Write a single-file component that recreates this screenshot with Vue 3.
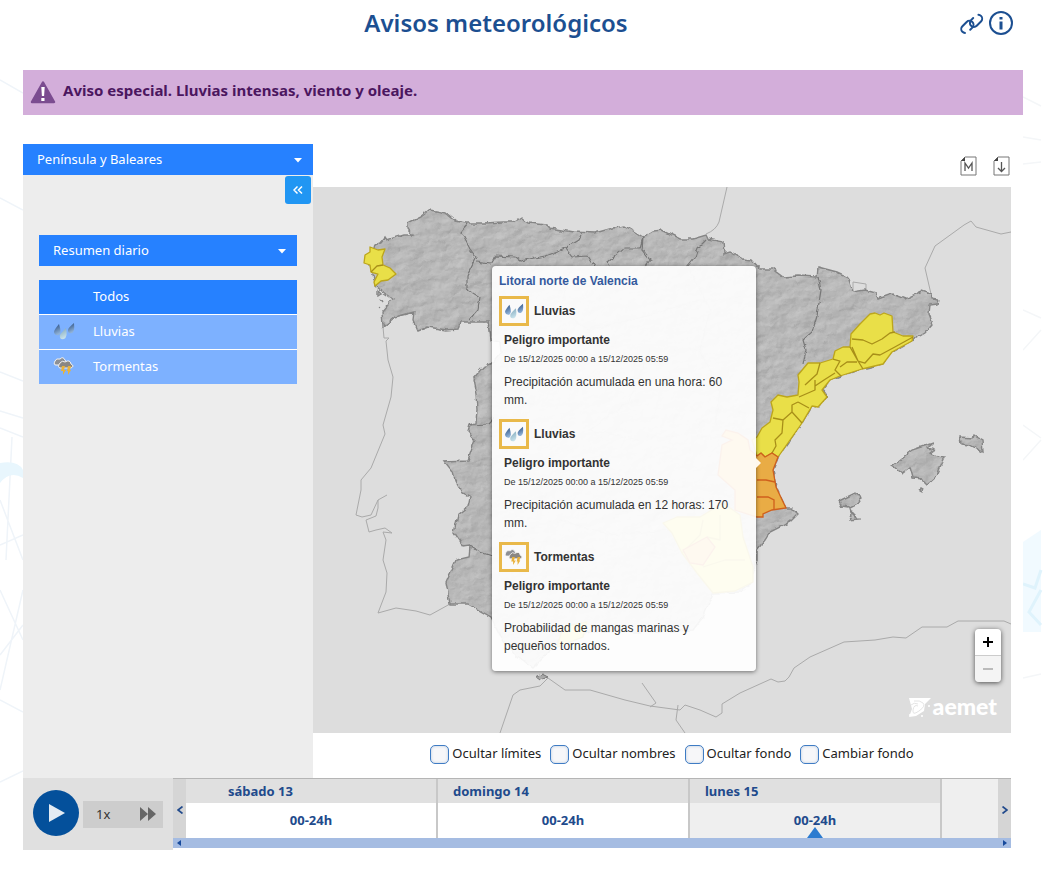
<script setup>
import { ref } from 'vue'

const region = ref('Península y Baleares')
const summary = ref('Resumen diario')
const phenomenon = ref('Todos')
const phenomena = [
  { name: 'Todos', icon: '' },
  { name: 'Lluvias', icon: 'rain' },
  { name: 'Tormentas', icon: 'storm' },
]
const period = 'De 15/12/2025 00:00 a 15/12/2025 05:59'
const warnings = [
  { name: 'Lluvias', icon: 'rain', text: 'Precipitación acumulada en una hora: 60 mm.' },
  { name: 'Lluvias', icon: 'rain', text: 'Precipitación acumulada en 12 horas: 170 mm.' },
  { name: 'Tormentas', icon: 'storm', text: 'Probabilidad de mangas marinas y pequeños tornados.' },
]
const toggles = [
  { id: 'limits', label: 'Ocultar límites' },
  { id: 'names', label: 'Ocultar nombres' },
  { id: 'ground', label: 'Ocultar fondo' },
  { id: 'change', label: 'Cambiar fondo' },
]
const days = [
  { name: 'sábado 13', first: true },
  { name: 'domingo 14' },
  { name: 'lunes 15', current: true },
]
</script>

<template>
  <div class="page">
    <svg class="backdrop left" viewBox="0 0 23 860" aria-hidden="true">
      <g fill="none" stroke="#eff4f9" stroke-width="1.500">
        <path d="M0 80L23 93M0 198L23 210M0 372L23 381" />
        <path d="M0 411L23 418M0 428L23 437M12 437L6 560M0 500L23 560M0 545L23 535M0 590L23 640M0 655L23 625M0 690L23 590M0 700L23 712M0 782L23 771" />
      </g>
      <path d="M0 463Q18 460 23 470V478Q10 470 0 483Z" fill="#e8f6fd" />
    </svg>
    <svg class="backdrop right" viewBox="0 0 22 860" aria-hidden="true">
      <g fill="none" stroke="#f4f6f8" stroke-width="1.500">
        <path d="M0 97L18 106M0 137L18 140M0 164L18 162M0 310L18 318M0 350L18 330M0 425L18 438M0 460L18 440M0 678L18 674" />
      </g>
      <path d="M0 542L18 530V632H0Z" fill="#f1faff" />
      <path d="M0 584L12 588L18 570M18 590L6 612L18 625" fill="none" stroke="#dff3fc" stroke-width="3" />
    </svg>

    <header class="top">
      <h1>Avisos meteorológicos</h1>
      <div class="top-icons">
        <a href="#enlace" aria-label="Enlace">
          <svg width="26" height="26" viewBox="0 0 26 26" fill="none" stroke="#1c4f91" stroke-width="2" stroke-linecap="round">
            <path d="M6.500 0H3.500a4 4 0 0 0-4 4 4 4 0 0 0 4 4H9.500a4 4 0 0 0 4-4 4 4 0 0 0-1-2.600" transform="translate(10.600 12.600) rotate(-45)" />
            <path d="M7 8H10a4 4 0 0 0 4-4 4 4 0 0 0-4-4H4a4 4 0 0 0-4 4 4 4 0 0 0 1 2.600" transform="translate(1.600 19) rotate(-45)" />
          </svg>
        </a>
        <button type="button" aria-label="Información">
          <svg width="26" height="26" viewBox="0 0 26 26">
            <circle cx="13" cy="13" r="11" fill="none" stroke="#1c4f91" stroke-width="2" />
            <path d="M11.500 7h3v2.500h-3zM11.500 11.500h3v8h-3z" fill="#1c4f91" />
          </svg>
        </button>
      </div>
    </header>

    <div class="alert">
      <svg width="26" height="23" viewBox="0 0 26 23">
        <path d="M13 1.500L24 21H2z" fill="#7b4c90" stroke="#7b4c90" stroke-width="2.500" stroke-linejoin="round" />
        <path d="M11.300 6h3.400l-.6 9h-2.200zM11.300 17h3.200v3h-3.200z" fill="#fff" />
      </svg>
      <a href="#aviso">Aviso especial. Lluvias intensas, viento y oleaje.</a>
    </div>

    <main class="viewer">
      <aside class="side">
        <div class="picker">
          <select v-model="region" aria-label="Zona">
            <option>Península y Baleares</option>
            <option>Canarias</option>
          </select>
          <svg width="8" height="5" viewBox="0 0 8 5"><path d="M0 0h8L4 4.500z" fill="#fff" /></svg>
        </div>
        <button class="collapse" type="button" aria-label="Plegar">
          <svg width="10" height="8" viewBox="0 0 10 8"><path d="M4.500 .5L1 4l3.500 3.500M9 .5L5.500 4 9 7.500" fill="none" stroke="#fff" stroke-width="1.500" /></svg>
        </button>
        <div class="filters">
          <div class="picker">
            <select v-model="summary" aria-label="Tipo de resumen">
              <option>Resumen diario</option>
              <option>Detalle horario</option>
            </select>
            <svg width="8" height="5" viewBox="0 0 8 5"><path d="M0 0h8L4 4.500z" fill="#fff" /></svg>
          </div>
          <div class="phenomena">
            <button
              v-for="p in phenomena"
              :key="p.name"
              type="button"
              :class="{ active: phenomenon === p.name }"
              @click="phenomenon = p.name"
            >
              <span class="glyph"><svg v-if="p.icon" width="22" height="20" viewBox="0 0 22 20"><use :href="'#' + p.icon" /></svg></span>
              {{ p.name }}
            </button>
          </div>
        </div>
      </aside>

      <section class="stage">
        <div class="tools">
          <button type="button" aria-label="Mapa">
            <svg width="17" height="20" viewBox="0 0 17 20">
              <path d="M5 1h11v18H1V5z" fill="#fff" stroke="#777" />
              <path d="M1 5h4V1z" fill="#444" />
              <path d="M5 15V7l3.500 5L12 7v8" fill="none" stroke="#555" stroke-width="1.300" />
            </svg>
          </button>
          <button type="button" aria-label="Descargar">
            <svg width="17" height="20" viewBox="0 0 17 20">
              <path d="M5 1h11v18H1V5z" fill="#fff" stroke="#777" />
              <path d="M1 5h4V1z" fill="#444" />
              <path d="M8.500 6v9M5 12l3.500 3.500L12 12" fill="none" stroke="#555" stroke-width="1.300" />
            </svg>
          </button>
        </div>

        <div class="map">
          <svg class="chart" viewBox="313 187 698 546" preserveAspectRatio="xMidYMid slice" aria-label="Mapa de avisos">
            <defs>
              <filter id="relief" x="0" y="0" width="100%" height="100%" color-interpolation-filters="sRGB">
                <feTurbulence type="fractalNoise" baseFrequency="0.05 0.08" numOctaves="4" seed="8" result="noise" />
                <feDiffuseLighting in="noise" surfaceScale="0.900" diffuseConstant="1.060" lighting-color="#c4c4c4" result="light">
                  <feDistantLight azimuth="220" elevation="62" />
                </feDiffuseLighting>
                <feComposite in="light" in2="SourceAlpha" operator="in" />
              </filter>
              <filter id="rough" x="-2%" y="-2%" width="104%" height="104%">
                <feTurbulence type="fractalNoise" baseFrequency="0.14" numOctaves="2" seed="4" result="n" />
                <feDisplacementMap in="SourceGraphic" in2="n" scale="5" xChannelSelector="R" yChannelSelector="G" />
              </filter>
              <linearGradient id="dropA" x1="0" y1="0" x2="0.300" y2="1"><stop offset="0" stop-color="#23477a" /><stop offset="1" stop-color="#8fb2d8" /></linearGradient>
              <linearGradient id="dropB" x1="0" y1="0" x2="0.300" y2="1"><stop offset="0" stop-color="#7da4b8" /><stop offset="1" stop-color="#c5e0ea" /></linearGradient>
              <path id="land" d="M375 245L380 243 385 237 387 240 403 235 413 235 408 229 408 223 420 217 429 210 436 211 446 213 456 221 466 223 485 223 503 222 513 222 521 217 528 223 547 225 550 228 573 232 595 233 613 228 625 226 635 232 643 237 653 231 662 230 680 239 693 239 706 235 708 239 723 242 724 254 730 252 743 259 752 260 760 269 772 269 783 277 797 276 817 277 818 267 837 272 848 277 853 292 865 290 876 293 878 299 892 294 905 299 922 291 931 294 932 299 938 300 937 304 930 305 929 314 933 324 925 333 913 340 892 352 883 364 862 369 840 376 830 380 822 390 827 397 818 407 812 406 802 423 790 440 778 457 773 470 776 487 786 508 792 508 798 514 790 522 770 532 765 540 757 550 757 560 752 575 753 582 740 592 713 593 703 617 693 630 640 632 590 632 560 640 545 655 532 668 515 655 500 635 491 617 468 604 450 604 446 583 456 560 469 557 470 546 464 547 454 532 458 515 468 507 470 497 462 493 455 480 453 472 444 461 468 460 475 440 468 432 470 425 476 423 477 410 476 394 473 379 483 367 491 364 501 352 500 342 490 340 488 322 460 322 458 329 446 330 428 327 418 331 413 320 414 312 395 317 383 327 382 312 393 299 383 292 376 286 370 265Z" />
              <path id="isles" d="M892 466L912 450 933 443 928 448 934 450 930 453 937 456 945 457 937 475 927 484 922 479 913 478 910 467 902 473ZM960 437L972 438 973 435 982 440 983 452 970 445 961 444ZM839 501L855 493 862 497 858 503 848 508 842 507ZM850 508L853 513 859 519 850 520 852 515ZM921 488l2 1-1 3-2-1ZM378 291l3 3-3 2ZM381 299l2 3M379 307l2 1" />
              <symbol id="rain" viewBox="0 0 22 20" overflow="visible">
                <path d="M6 3Q9 12 6 14Q2 15 1 11Q1 9 6 3Z" fill="url(#dropA)" />
                <path d="M21 2Q22 10 19 12Q15 13 15 9Q15 7 21 2Z" fill="url(#dropA)" />
                <path d="M13 7Q15 16 11 18Q6 19 7 14Q8 12 13 7Z" fill="url(#dropB)" />
              </symbol>
              <symbol id="storm" viewBox="0 0 22 20" overflow="visible">
                <path d="M3 9Q0 9 2 5Q3 2 7 3Q10 0 12 4Q15 6 12 9Z" fill="#8d9095" stroke="#f3f3f3" />
                <path d="M7 12Q4 11 7 7Q9 4 12 6Q17 3 18 8Q22 10 18 12Z" fill="#8a8783" stroke="#f0f0f0" />
                <path d="M9 10h3l-1 4h2l-3 5v-4H8zM15 10h3l-1 4h1l-3 5v-4h-1z" fill="#e9b23c" />
              </symbol>
            </defs>

            <rect x="313" y="187" width="698" height="546" fill="#ddd" />
            <g fill="none" stroke="#aaa" stroke-width="1">
              <path d="M383 327L384 338 389 338 386 341 388 360 393 377 391 397 383 425 385 434 371 468 361 480 361 490 356 515 362 517 371 515 378 500 387 495M378 500L378 508 376 516 366 520 369 532 376 530 385 528 392 533 383 532 386 540 383 560 387 573 386 592 378 613 396 608 416 611 430 615 450 604" />
              <path d="M727 187L719 222Q716 230 706 234M931 294L925 268 935 246 964 225 971 221 976 227 1001 234 1011 232M853 291V282L866 284V290" />
              <path d="M1011 624L1004 621H958L947 627H922L906 638 893 637 875 640 844 642 810 657 794 668 789 677 785 681 778 682 771 679 740 693 722 704 722 713 716 717 700 710 685 705 680 710 650 706 625 700 590 690 565 690 548 678 540 686 520 690 513 695 500 733M642 683L656 703 650 707M678 705L676 720 685 733" />
            </g>
            <g filter="url(#rough)">
              <g filter="url(#relief)" fill="#bbb"><use href="#land" /><use href="#isles" /></g>
              <g fill="none" stroke="#858585" stroke-width="1.400"><use href="#land" /><use href="#isles" /></g>
              <g fill="none" stroke="#777" stroke-width="1.200">
                <path d="M468 224L461 232 470 249 476 257 467 275 467 289 480 297 478 309 469 320M476 262L490 264 495 256 515 257 520 261 545 256 565 248 578 240 581 234M565 248L572 257 588 256 595 267M643 237L640 248 625 248 608 262 610 267M643 238L642 250 650 260 645 267M706 240L698 248 695 257 687 267M818 277L821 290 817 315 812 332 803 340 806 350 803 365M470 425L488 424 494 418M470 546L480 552 492 556" />
                <path d="M570 272L560 310 590 330 650 315 700 300M690 270L710 310 700 350 720 390 715 425M650 350L630 400 590 430 640 440M560 520L610 535 670 530" opacity="0.300" />
              </g>
              <path d="M536 677l6-3 6 3-8 3z" fill="#aaa" stroke="#777" />
            </g>
            <g stroke="#bca51c" stroke-width="1.300" stroke-linejoin="round">
              <g fill="#e9df48">
                <path d="M370 247L378 250 385 249 382 257 383 265 390 268 396 274 388 280 381 281 375 286 374 282 378 274 371 272 370 265 364 263 365 255 370 252Z" />
                <path d="M875 313L880 315 884 313 892 316 893 332 903 336 913 336 912 341 892 352 883 364 862 369 840 376 830 380 822 390 827 397 818 407 812 406 802 423 790 440 778 457 772 453 765 457 761 453 757 456 752 440 757 437 762 428 770 422 773 410 771 402 778 395 787 397 798 395 799 382 798 375 808 363 820 363 833 359 835 351 843 347 850 347 851 334 860 324 870 314Z" />
                <path d="M663 523L677 517 700 517 723 503 740 515 743 537 753 567 753 582 735 591 713 593 697 573 682 553 672 533ZM563 627L587 622 583 637 557 647Z" />
              </g>
              <path fill="none" stroke="#a88f18" d="M371 272L377 266 383 265M852 339L863 340 872 344 882 339 890 333 895 332M852 347L858 361 865 363 873 354 880 355 893 348 913 337M850 347L858 361 863 369M840 367L847 362 857 362M820 363L817 374 805 385M833 359L840 361 835 370 841 376M815 386L824 380 835 373M799 397L815 390 815 380M798 402L809 408M792 412L802 423M773 418L783 420 792 412 792 405 798 402M783 420L782 433 775 440 776 446 772 453" />
              <path fill="none" d="M682 553L700 535 703 520M707 537L720 540 720 515M703 567L725 560 745 560" />
            </g>
            <g fill="#e9ac45" stroke="#cf5f1c" stroke-width="1.300">
              <path d="M757 456L761 453 765 457 772 453 778 457 773 470 776 487 786 508 772 510 763 514 763 517 757 517 735 510 735 490 718 475 722 445 732 440 722 436 726 430 738 433 748 440 750 450Z" />
              <path d="M757 480L766 480 775 482M757 497L768 497 774 500 774 509" fill="none" />
              <path d="M683 550L707 537 715 547 703 565 690 563Z" />
            </g>
            <g class="mark" fill="#fff">
              <path d="M909 698h22l-6 6-1 7-8 5-7 1 3-8z" />
              <path d="M914 701q6-1 9 2t-4 8-6-1 5-4M911 705q3-3 7-1" fill="none" stroke="#ddd" stroke-width=".8" />
              <circle cx="929" cy="706" r="1" /><circle cx="910" cy="715" r="1" /><circle cx="922" cy="716" r="1" />
            </g>
          </svg>

          <article class="popup">
            <h2>Litoral norte de Valencia</h2>
            <div v-for="(w, i) in warnings" :key="i" class="warning">
              <div class="warning-head">
                <span class="badge"><svg width="20" height="18" viewBox="0 0 22 20"><use :href="'#' + w.icon" /></svg></span>
                <strong>{{ w.name }}</strong>
              </div>
              <div class="warning-body">
                <strong>Peligro importante</strong>
                <small>{{ period }}</small>
                <p>{{ w.text }}</p>
              </div>
            </div>
          </article>

          <div class="zoom">
            <button type="button" aria-label="Acercar"><svg width="12" height="12" viewBox="0 0 12 12"><path d="M6 1v10M1 6h10" stroke="#000" stroke-width="2" /></svg></button>
            <button type="button" aria-label="Alejar" disabled><svg width="12" height="12" viewBox="0 0 12 12"><path d="M1 6h10" stroke="#bbb" stroke-width="2" /></svg></button>
          </div>
          <span class="brand">aemet</span>
        </div>

        <div class="toggles">
          <label v-for="t in toggles" :key="t.id" :for="t.id"><input :id="t.id" type="checkbox" />{{ t.label }}</label>
        </div>
      </section>
    </main>

    <footer class="timeline">
      <div class="player">
        <button class="play" type="button" aria-label="Reproducir">
          <svg width="46" height="46" viewBox="0 0 46 46"><circle cx="23" cy="23" r="23" fill="#04509b" /><path d="M16 14l16 9-16 9z" fill="#e3ebf3" /></svg>
        </button>
        <button class="speed" type="button">
          1x
          <svg width="16" height="14" viewBox="0 0 16 14"><path d="M0 0l8 7-8 7zM8 0l8 7-8 7z" fill="#666" /></svg>
        </button>
      </div>
      <div class="track">
        <div class="days">
          <button class="step" type="button" aria-label="Anterior"><svg width="6" height="8" viewBox="0 0 6 8"><path d="M5.500 .5L1 4l4.500 3.500" fill="none" stroke="#214a8c" stroke-width="1.700" /></svg></button>
          <div v-for="d in days" :key="d.name" class="day" :class="{ first: d.first, current: d.current }">
            <div class="day-name">{{ d.name }}</div>
            <button class="hours" type="button">00-24h</button>
          </div>
          <div class="rest"></div>
          <button class="step" type="button" aria-label="Siguiente"><svg width="6" height="8" viewBox="0 0 6 8"><path d="M.5 .5L5 4 .5 7.500" fill="none" stroke="#214a8c" stroke-width="1.700" /></svg></button>
        </div>
        <div class="scroll">
          <svg width="4" height="6" viewBox="0 0 4 6"><path d="M4 0v6L0 3z" fill="#174a9c" /></svg>
          <svg width="4" height="6" viewBox="0 0 4 6"><path d="M0 0v6l4-3z" fill="#174a9c" /></svg>
        </div>
      </div>
    </footer>
  </div>
</template>

<style>
body {
  margin: 0;
  background: #fff;
}
</style>

<style scoped>
.page {
  position: relative;
  min-height: 100vh;
  box-sizing: border-box;
  padding: 0 22px 0 23px;
  font-family: "Noto Sans", "Open Sans", sans-serif;
  font-size: 13px;
  color: #222;
}
.backdrop {
  position: absolute;
  top: 0;
  height: 860px;
}
.left {
  left: 0;
  width: 23px;
}
.right {
  right: 0;
  width: 22px;
}
button {
  border: 0;
  padding: 0;
  margin: 0;
  background: none;
  font: inherit;
  color: inherit;
  cursor: pointer;
}
svg {
  display: block;
}
.top {
  display: grid;
  grid-template-columns: 1fr auto 1fr;
  align-items: center;
  height: 46px;
}
h1 {
  grid-column: 2;
  margin: 0;
  padding-right: 54px;
  font-size: 24px;
  font-weight: 600;
  line-height: 32px;
  color: #1c4f91;
}
.top-icons {
  display: flex;
  justify-content: flex-end;
  gap: 4px;
  padding-right: 9px;
}
.alert {
  display: flex;
  align-items: center;
  gap: 7px;
  height: 45px;
  margin: 24px 0 29px;
  padding-left: 7px;
  background: #d3aeda;
}
.alert a {
  padding-bottom: 6px;
  color: #4b165f;
  font-size: 15px;
  font-weight: 700;
  text-decoration: none;
}
.viewer {
  display: grid;
  grid-template-columns: 290px minmax(0, 1fr);
  margin-right: 12px;
}
.side {
  background: #ededed;
}
.picker {
  position: relative;
}
.picker select {
  display: block;
  width: 100%;
  height: 31px;
  padding: 0 14px 2px;
  border: 0;
  border-radius: 0;
  appearance: none;
  background: #2681ff;
  color: #fff;
  font: inherit;
}
.picker svg {
  position: absolute;
  right: 11px;
  top: 14px;
  pointer-events: none;
}
.collapse {
  display: flex;
  align-items: center;
  justify-content: center;
  width: 26px;
  height: 28px;
  margin: 1px 2px 0 auto;
  border-radius: 3px;
  background: #2196f3;
}
.filters {
  padding: 31px 16px 0;
}
.phenomena {
  display: grid;
  gap: 1px;
  margin-top: 14px;
  background: #fff;
}
.phenomena button {
  display: flex;
  align-items: center;
  height: 34px;
  padding: 0 0 2px 14px;
  background: #7db1ff;
  color: #fff;
}
.phenomena .active {
  background: #2681ff;
}
.glyph {
  width: 40px;
}
.tools {
  display: flex;
  justify-content: flex-end;
  align-items: center;
  gap: 16px;
  height: 43px;
  padding-right: 1px;
}
.map {
  position: relative;
  aspect-ratio: 698 / 546;
  overflow: hidden;
  background: #ddd;
}
.chart {
  width: 100%;
  height: 100%;
}
.popup {
  position: absolute;
  left: 179px;
  top: 79px;
  width: 264px;
  box-sizing: border-box;
  padding: 6px 20px 9px 7px;
  border-radius: 4px;
  background: rgba(255, 255, 255, 0.92);
  box-shadow: 0 1px 4px rgba(0, 0, 0, 0.5);
  font-family: "Liberation Sans", Arial, sans-serif;
  font-size: 12px;
  line-height: 18px;
  color: #333;
}
.popup::after {
  content: "";
  position: absolute;
  right: -5px;
  top: 192px;
  border: solid transparent;
  border-width: 5px 0 5px 5px;
  border-left-color: #fff8ec;
}
.popup h2 {
  margin: 0 0 6px;
  font-size: 12px;
  font-weight: 700;
  color: #34599d;
}
.warning {
  padding-bottom: 10px;
}
.warning:last-child {
  padding-bottom: 7px;
}
.warning-head {
  display: flex;
  align-items: center;
  gap: 5px;
}
.badge {
  display: flex;
  align-items: center;
  justify-content: center;
  width: 24px;
  height: 24px;
  border: 3px solid #e9b94a;
  background: #fafafa;
}
.warning-body {
  padding: 5px 0 0 5px;
}
.warning-body strong,
.warning-body small {
  display: block;
}
.warning-body small {
  margin-top: 1px;
  font-size: 9px;
}
.warning-body p {
  margin: 5px 0 0;
}
.zoom {
  position: absolute;
  right: 10px;
  top: 442px;
  display: grid;
  gap: 1px;
  border-radius: 4px;
  overflow: hidden;
  background: #ccc;
  box-shadow: 0 1px 5px rgba(0, 0, 0, 0.65);
}
.zoom button {
  display: flex;
  align-items: center;
  justify-content: center;
  width: 26px;
  height: 26px;
  background: #fff;
}
.zoom button:disabled {
  background: #f4f4f4;
}
.brand {
  position: absolute;
  right: 14px;
  bottom: 14px;
  font-family: Lato, sans-serif;
  font-size: 23px;
  font-weight: 900;
  line-height: 26px;
  color: #fff;
}
.toggles {
  display: flex;
  flex-wrap: wrap;
  justify-content: center;
  align-items: center;
  gap: 9px;
  min-height: 45px;
  padding: 0 0 2px 20px;
  box-sizing: border-box;
}
.toggles label {
  display: flex;
  align-items: flex-start;
  gap: 3px;
  line-height: 16px;
}
.toggles input {
  appearance: none;
  width: 19px;
  height: 19px;
  margin: 0;
  border: 1px solid #3f7cc4;
  border-radius: 5px;
  background: #f7f7f9;
  box-shadow: inset 0 0 3px #b8c8dc;
}
.timeline {
  display: grid;
  grid-template-columns: 150px minmax(0, 1fr);
  align-items: start;
  margin-right: 12px;
}
.player {
  display: flex;
  align-items: center;
  gap: 4px;
  height: 72px;
  padding-left: 10px;
  box-sizing: border-box;
  background: #e0e0e0;
}
.play {
  margin-bottom: 2px;
}
.speed {
  display: flex;
  align-items: center;
  justify-content: space-between;
  width: 80px;
  height: 27px;
  padding: 0 7px 0 13px;
  background: #cdcdcd;
  color: #333;
}
.track {
  border-top: 1px solid #b5b5b5;
  color: #214a8c;
  font-weight: 700;
}
.days {
  display: grid;
  grid-template-columns: 13px 252fr 252fr 252fr 56fr 13px;
  height: 59px;
}
.step {
  display: flex;
  align-items: center;
  justify-content: center;
  padding-top: 3px;
  background: #d5d5d5;
}
.day {
  display: grid;
  grid-template-rows: 24px 35px;
  border-right: 2px solid #c8c8c8;
}
.day-name {
  padding-left: 15px;
  line-height: 24px;
  background: #e0e0e0;
}
.first .day-name {
  padding-left: 42px;
}
.hours {
  position: relative;
  padding-bottom: 2px;
  background: #fff;
}
.current .hours,
.rest {
  background: #efefef;
}
.current .hours::after {
  content: "";
  position: absolute;
  left: calc(50% - 8px);
  bottom: 0;
  border: solid transparent;
  border-width: 0 8px 11px;
  border-bottom-color: #2c7bd0;
}
.scroll {
  display: flex;
  justify-content: space-between;
  align-items: center;
  height: 10px;
  padding: 0 4px;
  background: #a5bce2;
}
</style>
